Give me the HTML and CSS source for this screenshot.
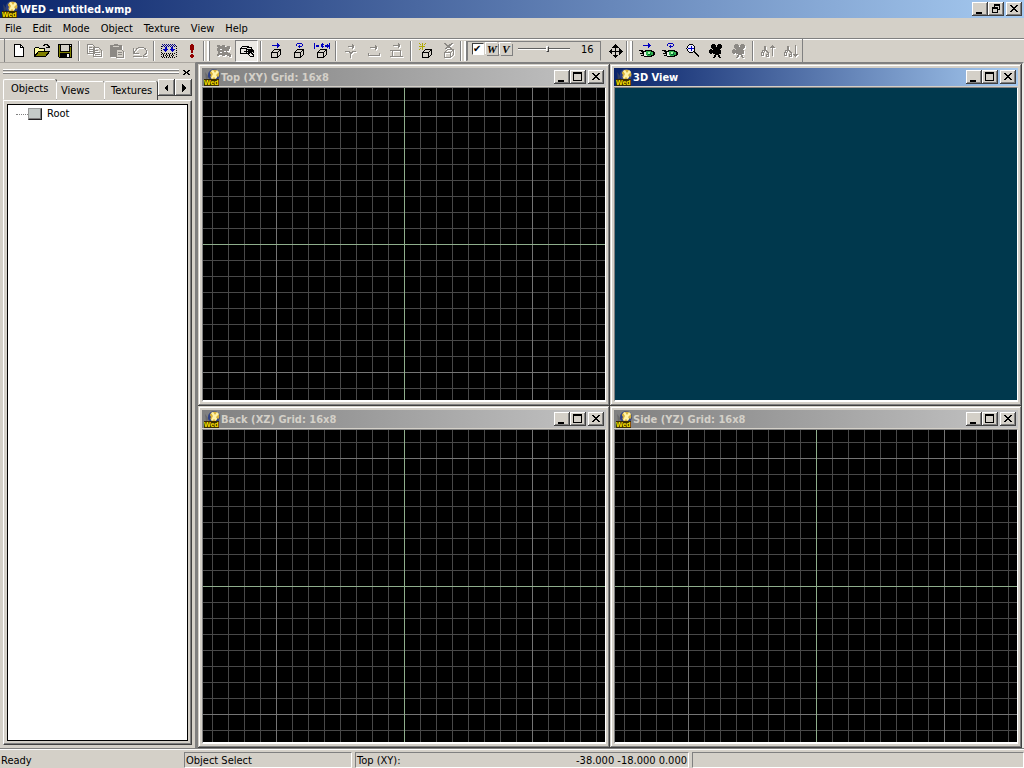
FILE: index.html
```html
<!DOCTYPE html>
<html lang="en">
<head>
<meta charset="utf-8">
<title>WED - untitled.wmp</title>
<link rel="stylesheet" href="styles.css">
</head>
<body>
<svg class="defs" aria-hidden="true">
  <symbol id="logo" viewBox="0 0 16 17" overflow="visible">
    <path d="M1 3l4 5-3 3z" fill="#555" opacity=".5"/>
    <circle cx="10" cy="6" r="6" fill="#3a4a80"/>
    <circle cx="10.500" cy="5.500" r="4.800" fill="#d9b23a"/>
    <path d="M7 2l2-1 2 3 2-3 2 2-3 3 2 3-2 1-2-2-2 2-1-1 2-4z" fill="#fff3a8"/>
    <path d="M5 3l2 3-2 4-1-3zM14 7l1 2-3 3-1-1z" fill="#2c3f86"/>
    <path d="M0 10h15v7H0z" fill="#3a2c00"/>
    <text x="0" y="16" class="logo-text">Wed</text>
  </symbol>
  <symbol id="box" viewBox="0 0 16 16">
    <path d="M3.500 9.500h6v5h-6zM3.500 9.500l3-3h6l-3 3M12.500 6.500v5l-3 3" fill="none" stroke="currentColor"/>
  </symbol>
  <symbol id="min" viewBox="0 0 16 14"><path d="M4 10h6v2H4z"/></symbol>
  <symbol id="max" viewBox="0 0 16 14"><path d="M3 2h9v9H3zM4 4v6h7V4z" fill-rule="evenodd"/></symbol>
  <symbol id="restore" viewBox="0 0 16 14"><path d="M6 2h6v6h-2V7h1V4H7v1H6zM4 5h6v6H4zM5 7v3h4V7z" fill-rule="evenodd"/></symbol>
  <symbol id="close" viewBox="0 0 16 14"><path d="M4 3h2v1h1v1h2V4h1V3h2v1h-1v1h-1v1H9v1h1v1h1v1h1v1h-2V9H9V8H7v1H6v1H4V9h1V8h1V7h1V6H6V5H5V4H4z"/></symbol>
  <symbol id="camera" viewBox="0 0 16 16"><path d="M4 1h3v1h1v2h1V2h1V1h3v1h1v3h-1v1h-1v1h1v4h-2v1h1v2h1v1h-2v-1h-1v-2H8v2H7v1H5v-1h1v-2h1v-1H5v-1H4v1H2v-1H1V7h1V6h2v1h1V6H4V5H3V2h1z" fill="currentColor"/></symbol>
  <symbol id="eye" viewBox="0 0 16 16">
    <path d="M0 7h4v1h2V7h7v1h2v1h1v3h-1v1h-2v1H5v-1H2v-1h2v-1H1v-1h2V9H2V8H0z" fill="#000"/>
    <path d="M5 9h3v4H5z" fill="#e8f4e8"/><path d="M7 8h5v1h2v3h-2v1H8v-1H7z" fill="#30b050"/><path d="M9 9h2v2H9z" fill="#afa"/><path d="M11 10h1v2H9v-1h2z" fill="#063"/>
  </symbol>
  <symbol id="arrow" viewBox="0 0 16 16"><path d="M4 3h5V1h1v1h1v1h1v1h-1v1h-1v1H9V4H4z" fill="#0000c0"/></symbol>
  <symbol id="turn" viewBox="0 0 16 16"><path d="M6 1h5v1h1v2h-1v1H9v1H8V5H7V4h1V3h1v1h2V2H6v2H5V2h1z" fill="#0000c0"/></symbol>
  <symbol id="sort" viewBox="0 0 16 16"><path d="M4.500 9v-6h1v4l3 3v3h-2v-2h2M1.500 12.500v-3h2v3zM2.500 9v-2h2" fill="none" stroke="currentColor"/></symbol>
  <symbol id="stamp" viewBox="0 0 16 16"><path d="M1 2h3v1h2V2h3v2h2V3h3v3h-1v2h-2v1h1v1h2v1h1v3h-2v-1h-2v-1H9v1H6v-1H3v1H1v-2h1V8H1V5h1V4H1zM4 6v1h2V6zM8 8v1h2V8zM4 9v1h2V9z" fill="currentColor" fill-rule="evenodd"/></symbol>
</svg>

<div class="app">
  <header class="titlebar active">
    <svg class="logo"><use href="#logo"/></svg>
    <h1 class="caption">WED - untitled.wmp</h1>
    <button class="cap" aria-label="Minimize"><svg><use href="#min"/></svg></button>
    <button class="cap" aria-label="Restore"><svg><use href="#restore"/></svg></button>
    <button class="cap shut" aria-label="Close"><svg><use href="#close"/></svg></button>
  </header>

  <nav class="menu">
    <button>File</button><button>Edit</button><button>Mode</button><button>Object</button><button>Texture</button><button>View</button><button>Help</button>
  </nav>

  <div class="toolbar">
    <div class="band first">
      <button class="tool" aria-label="New"><svg viewBox="0 0 16 16"><path d="M3.500 1.500h6l3 3v9h-9z" fill="#fff" stroke="#000"/><path d="M9.500 1.500v3h3" fill="none" stroke="#000"/></svg></button>
      <button class="tool" aria-label="Open"><svg viewBox="0 0 16 16"><path d="M1 5h4v1h5v3H5v1H4v1H3v1H2v1H1z" fill="#ffffa0"/><path d="M4 9h11l-3 5H1z" fill="#808000"/><path d="M.5 13.500v-8l1-1h3l1 1h5v3M.5 13.500l4-5h11l-4 5zM9 2.500h1l1-1h2l1 1v2M12 4.500h3v-2" fill="none" stroke="#000"/></svg></button>
      <button class="tool" aria-label="Save"><svg viewBox="0 0 16 16"><path d="M1 1h14v14H2l-1-1z"/><path d="M2 2h1v12H2zM13 4h1v10h-1zM3 9h10v1H3z" fill="#808000"/><path d="M4 2h8v6H4z" fill="#d4d0c8"/><path d="M10 11h2v3h-2zM13 2h1v1h-1z" fill="#eee"/></svg></button>
      <i class="sep"></i>
      <button class="tool off" aria-label="Copy"><svg viewBox="0 0 16 16"><path d="M1.500 1.500h5l2 2v7h-7zM3 4.500h3M3 6.500h4M3 8.500h4M7.500 4.500h5l3 3v6h-8zM9 7.500h3M9 9.500h5M9 11.500h5" fill="none" stroke="currentColor"/></svg></button>
      <button class="tool off" aria-label="Paste"><svg viewBox="0 0 16 16"><path d="M1 2h4V1h4v1h4v4h-5v8H1z" fill="currentColor"/><path d="M4 3h6v1H4z" fill="#d4d0c8"/><path d="M7.500 6.500h5l2 2v6h-7zM9 9.500h4M9 11.500h4" fill="#d4d0c8" stroke="currentColor"/></svg></button>
      <button class="tool off" aria-label="Undo"><svg viewBox="0 0 16 16"><path d="M1.500 5v5h5M2 9.500l3-4q4-3 8 0 3 4 0 6l-2 1M1 13.500h9M11 13.500h4" fill="none" stroke="currentColor"/></svg></button>
      <i class="sep"></i>
      <button class="tool" aria-label="Build map"><svg viewBox="0 0 16 16"><path d="M.5 3v12M15.500 3v12" stroke="#000" stroke-dasharray="1 1"/><path d="M1 14.500h14M2 12.500h12M1 10.500h14" stroke="#000" stroke-dasharray="1 1"/><path d="M2 11.500h12M2 13.500h12" stroke="#000" stroke-dasharray="1 2"/><path d="M1 1.500h14M2 2.500h14M1 3.500h14" stroke="#000080" stroke-dasharray="1 1"/><path d="M4 4h2v2h1v1H6v1H5v1H4V8H3V7H2V6h2zM10 4h2v2h2v1h-1v1h-1v1h-1V8h-1V7H9V6h1z" fill="#0000c0"/></svg></button>
      <button class="tool" aria-label="Run"><svg viewBox="0 0 16 16"><path d="M7 1h2v1h1v5H9v3H7V7H6V2h1zM7 11h2v1h1v2H9v1H7v-1H6v-2h1z" fill="#900000"/></svg></button>
    </div>

    <div class="band">
      <i class="grip"></i>
      <button class="tool off" aria-label="Brush mode"><svg><use href="#stamp"/></svg></button>
      <button class="tool pressed" aria-label="Object select"><svg viewBox="0 0 16 16"><path d="M1.500 5.500h6v5h-6zM1.500 5.500l2-2h6l-2 2M9.500 4l3 1 2 3M7.500 10l3 0M8 6.500h4l3 3M5 8.500h6l4 4M8 10l3 3h4" fill="none" stroke="#000"/><path d="M9 7h4v3H9z"/></svg></button>
      <i class="sep"></i>
      <button class="tool" aria-label="Move"><svg><use href="#box"/><use href="#arrow" y="-1"/></svg></button>
      <button class="tool" aria-label="Rotate"><svg><use href="#box"/><use href="#turn" y="-1"/></svg></button>
      <button class="tool" aria-label="Scale"><svg viewBox="0 0 16 16"><use href="#box" width="16" height="16"/><path d="M0 0h1v6H0zM15 0h1v6h-1zM1 3l2-2v1h2v2H3v1zM15 3l-2-2v1h-2v2h2v1zM6 2l2-2 2 2H9v1h1L8 5 6 3h1V2z" fill="#0000c0"/></svg></button>
      <i class="sep"></i>
      <button class="tool off" aria-label="Move vertex"><svg viewBox="0 0 16 16"><path d="M5 3.500h6M9.500 1v5M10.500 2v3M2 8.500h4l2 2 2-2h3M7.500 10v5" fill="none" stroke="currentColor"/></svg></button>
      <button class="tool off" aria-label="Move edge"><svg viewBox="0 0 16 16"><path d="M4 4.500h7M9.500 2v5M10.500 3v3M2.500 10v2.500h11V10" fill="none" stroke="currentColor"/></svg></button>
      <button class="tool off" aria-label="Move face"><svg viewBox="0 0 16 16"><path d="M4 2.500h7M9.500 0v5M10.500 1v3M3.500 7.500h8v6h-8zM1 7.500h2M1 13.500h2M12 13.500h2" fill="none" stroke="currentColor"/></svg></button>
      <i class="sep"></i>
      <button class="tool" aria-label="Add object"><svg viewBox="0 0 16 16"><use href="#box" x="1" width="16" height="16"/><path d="M4 0h1v3h2v1H5v3H4V4H1V3h3zM1 0h1v1h1v1H2V1H1zM7 0h1v1H7v1H6V1h1zM2 5h1v1H2v1H1V6h1z" fill="#b0a800"/></svg></button>
      <button class="tool off" aria-label="Delete object"><svg viewBox="0 0 16 16"><use href="#box" width="16" height="16"/><path d="M3 0h2v1h1v1h2V1h2V0h2v1h-1v1h-1v1H9v1h1v1h1v1H9V5H6v1H4V5h1V4h1V3H5V2H4V1H3z" fill="currentColor"/></svg></button>
    </div>

    <div class="band">
      <i class="grip short"></i>
      <div class="gridbox">
        <input type="checkbox" class="check" aria-label="Show grid" checked>
        <button class="letter">W</button>
        <button class="letter">V</button>
        <input type="range" class="slider" aria-label="Grid size" min="0" max="100" value="58">
        <output class="size">16</output>
      </div>
      <button class="tool" aria-label="Center"><svg viewBox="0 0 16 16"><path d="M7 5H5V4h1V3h1V2h1V1h1v1h1v1h1v1h1v1H9v3h3V5h1v1h1v1h1v1h1v1h-1v1h-1v1h-1v1h-1V9H9v3h2v1h-1v1H9v1H8v-1H7v-1H6v-1h2V9H5v2H4v-1H3V9H2V8h1V7h1V6h1v2h3V5z"/></svg></button>
    </div>

    <div class="band last">
      <i class="grip"></i>
      <button class="tool" aria-label="Move camera"><svg><use href="#eye"/><use href="#arrow" y="-1"/></svg></button>
      <button class="tool" aria-label="Turn camera"><svg><use href="#eye"/><use href="#turn" y="-1"/></svg></button>
      <button class="tool" aria-label="Zoom"><svg viewBox="0 0 16 16"><circle cx="6" cy="5.500" r="4" fill="#eef" stroke="#000"/><path d="M3 5h6v1H3zM5.500 3h1v5h-1z" fill="#0000c0"/><path d="M9 8.500l5 5" stroke="#000" stroke-width="2"/></svg></button>
      <button class="tool" aria-label="Camera"><svg><use href="#camera"/></svg></button>
      <button class="tool off" aria-label="Camera off"><svg><use href="#camera"/></svg></button>
      <i class="sep"></i>
      <button class="tool off" aria-label="Move up"><svg viewBox="0 0 16 16"><use href="#sort" width="16" height="16"/><path d="M12.500 2v11M10 4.500h5M11 3.500h3" stroke="currentColor"/></svg></button>
      <button class="tool off" aria-label="Move down"><svg viewBox="0 0 16 16"><use href="#sort" width="16" height="16"/><path d="M12.500 2v12M10 11.500h5M11 12.500h3" stroke="currentColor"/></svg></button>
    </div>
  </div>

  <main class="body">
    <aside class="panel">
      <div class="dock"><i class="rails"></i><button class="dock-close" aria-label="Close panel"><svg viewBox="0 0 7 7"><path d="M0 1h2v1h1v1h1V2h1V1h2v1H6v1H5v1h1v1h1v1H5V5H4V4H3v1H2v1H0V5h1V4h1V3H1V2H0z"/></svg></button></div>
      <div class="tabs">
        <button class="tab on">Objects</button><button class="tab views">Views</button><button class="tab textures">Textures</button>
        <button class="step" aria-label="Scroll left"><svg viewBox="0 0 8 8"><path d="M5 0v8L1 4z"/></svg></button>
        <button class="step" aria-label="Scroll right"><svg viewBox="0 0 8 8"><path d="M2 0v8l4-4z"/></svg></button>
      </div>
      <div class="page">
        <ul class="tree"><li><i class="branch"></i><i class="cube"></i><span>Root</span></li></ul>
      </div>
    </aside>

    <div class="mdi">
      <section class="win">
        <div class="titlebar"><svg class="logo"><use href="#logo"/></svg><h2 class="caption">Top (XY) Grid: 16x8</h2>
          <button class="cap" aria-label="Minimize"><svg><use href="#min"/></svg></button><button class="cap" aria-label="Maximize"><svg><use href="#max"/></svg></button><button class="cap shut" aria-label="Close"><svg><use href="#close"/></svg></button></div>
        <div class="canvas grid"></div>
      </section>
      <section class="win">
        <div class="titlebar active"><svg class="logo"><use href="#logo"/></svg><h2 class="caption">3D View</h2>
          <button class="cap" aria-label="Minimize"><svg><use href="#min"/></svg></button><button class="cap" aria-label="Maximize"><svg><use href="#max"/></svg></button><button class="cap shut" aria-label="Close"><svg><use href="#close"/></svg></button></div>
        <div class="canvas scene"></div>
      </section>
      <section class="win">
        <div class="titlebar"><svg class="logo"><use href="#logo"/></svg><h2 class="caption">Back (XZ) Grid: 16x8</h2>
          <button class="cap" aria-label="Minimize"><svg><use href="#min"/></svg></button><button class="cap" aria-label="Maximize"><svg><use href="#max"/></svg></button><button class="cap shut" aria-label="Close"><svg><use href="#close"/></svg></button></div>
        <div class="canvas grid"></div>
      </section>
      <section class="win">
        <div class="titlebar"><svg class="logo"><use href="#logo"/></svg><h2 class="caption">Side (YZ) Grid: 16x8</h2>
          <button class="cap" aria-label="Minimize"><svg><use href="#min"/></svg></button><button class="cap" aria-label="Maximize"><svg><use href="#max"/></svg></button><button class="cap shut" aria-label="Close"><svg><use href="#close"/></svg></button></div>
        <div class="canvas grid"></div>
      </section>
    </div>
  </main>

  <footer class="status">
    <span class="ready">Ready</span>
    <span class="cell mode">Object Select</span>
    <span class="cell coords"><span>Top (XY):</span><span>-38.000 -18.000 0.000</span></span>
    <span class="cell rest"></span>
  </footer>
</div>
</body>
</html>
```

FILE: styles.css
```css
:root {
  --face: #d4d0c8;
  --shade: #808080;
  --dark: #404040;
}
* { box-sizing: border-box; }
body { margin: 0; background: var(--face); }
body, button, output {
  font-family: "DejaVu Sans Condensed", "DejaVu Sans", sans-serif;
  font-size: 11px;
  line-height: 14px;
  color: #000;
}
button { margin: 0; padding: 0; border: 0; background: none; }
svg { display: block; shape-rendering: crispEdges; }
.defs { position: absolute; width: 0; height: 0; }
.app { display: flex; flex-direction: column; height: 100vh; overflow: hidden; }

/* Title bars */
.titlebar {
  display: flex;
  align-items: center;
  flex: none;
  height: 18px;
  padding: 0 2px;
  background: linear-gradient(90deg, #808080, #c4c4c4);
  color: #d4d0c8;
}
.titlebar.active { background: linear-gradient(90deg, #0a246a, #a6caf0); color: #fff; }
.logo { flex: none; width: 16px; height: 17px; overflow: visible; shape-rendering: auto; }
.logo-text { font: bold 7px "Liberation Sans", sans-serif; fill: #ffe600; }
.caption { flex: 1; margin: 0 0 0 2px; padding-top: 2px; font-size: 11px; line-height: 14px; font-weight: bold; white-space: nowrap; }
.cap {
  width: 16px;
  height: 14px;
  background: var(--face);
  box-shadow: inset -1px -1px #404040, inset 1px 1px #fff, inset -2px -2px #808080;
}
.cap svg { width: 16px; height: 14px; }
.shut { margin-left: 2px; }

/* Menu */
.menu { display: flex; gap: 11px; flex: none; height: 20px; padding: 0 5px; }
.menu button { padding-top: 2px; }

/* Toolbar */
.toolbar { display: flex; flex: none; height: 24px; border-top: 1px solid var(--shade); box-shadow: inset 0 1px #fff; }
.band { display: flex; align-items: center; }
.first { margin-left: 4px; padding-left: 2px; border-left: 1px solid var(--shade); }
.last { border-right: 1px solid var(--shade); }
.grip { width: 9px; height: 20px; background: linear-gradient(90deg, #808080 1px, #fff 1px 2px, transparent 2px 4px, #fff 4px 6px, #808080 6px 7px, transparent 7px); }
.short { width: 7px; }
.tool { display: grid; place-items: center; width: 23px; height: 22px; }
.tool svg { width: 16px; height: 16px; overflow: visible; }
.off { color: #8c8984; }
.off svg { filter: drop-shadow(1px 1px #fff); }
.pressed { background: #ebe9e4; border: 1px solid; border-color: #808080 #fff #fff #808080; }
.sep { width: 6px; height: 20px; background: linear-gradient(90deg, transparent 2px, #808080 2px 3px, #fff 3px 4px, transparent 4px); }
.gridbox {
  display: flex;
  align-items: center;
  height: 20px;
  width: 134px;
  margin-right: 2px;
  padding: 0 0 3px 4px;
  border: 1px solid;
  border-color: var(--shade) var(--shade) transparent var(--shade);
}
.check {
  appearance: none;
  width: 12px;
  height: 12px;
  margin: 0 2px 0 0;
  border: 1px solid;
  border-color: var(--dark) #fff #fff var(--dark);
  background: #fff;
}
.check:checked::before { content: "✔"; display: block; font: bold 10px/10px "DejaVu Sans", sans-serif; }
.letter {
  width: 12px;
  height: 12px;
  margin-right: 2px;
  box-shadow: 1px 1px #808080, -1px -1px #fff;
  font: italic bold 11px/12px "Liberation Serif", serif;
}
.slider { appearance: none; width: 52px; height: 12px; margin: 0 0 0 4px; background: linear-gradient(transparent 5px, #606060 5px 6px, #fff 6px 7px, transparent 7px); }
.slider::-webkit-slider-thumb { appearance: none; width: 3px; height: 6px; border: 1px solid; border-color: #fff #404040 #404040 #fff; background: var(--face); }
.size { flex: 1; padding: 2px 0 0 11px; }

/* Side panel */
.body { display: flex; flex: 1; min-height: 0; }
.panel { display: flex; flex-direction: column; flex: none; width: 196px; padding: 4px 3px 3px 3px; border-top: 1px solid #aaa6a0; border-right: 1px solid var(--shade); }
.dock { display: flex; align-items: center; height: 10px; gap: 4px; }
.rails { flex: 1; height: 6px; background: linear-gradient(#fff 1px, #808080 1px 2px, transparent 2px 3px, #fff 3px 4px, #808080 4px 5px, transparent 5px); }
.dock-close { width: 7px; height: 7px; margin-right: 2px; }
.dock-close svg { width: 7px; height: 7px; }
.tabs { display: flex; align-items: flex-end; height: 23px; padding-top: 2px; }
.tab {
  height: 19px;
  border: 1px solid;
  border-color: #fff transparent transparent #fff;
  border-radius: 2px 2px 0 0;
  box-shadow: 1px 0 var(--dark);
  text-align: left;
  padding-left: 4px;
}
.tab.on { height: 21px; width: 53px; padding: 0 0 2px 7px; }
.tab.views { width: 48px; }
.tab.textures { width: 53px; padding-left: 6px; }
.step {
  display: grid;
  place-items: center;
  align-self: flex-start;
  width: 17px;
  height: 17px;
  margin-left: 1px;
  box-shadow: inset -1px -1px #404040, inset 1px 1px #fff, inset -2px -2px #808080;
}
.step + .step { margin-left: 0; }
.step svg { width: 8px; height: 8px; }
.page { flex: 1; display: flex; padding: 3px; border: 1px solid; border-color: #fff var(--dark) var(--dark) #fff; box-shadow: inset -1px -1px #808080; }
.tree { flex: 1; margin: 0; padding: 0; border: 1px solid #000; background: #fff; list-style: none; }
.tree li { display: flex; align-items: center; height: 18px; padding-left: 8px; }
.branch { width: 12px; border-top: 1px dotted #808080; }
.cube { width: 14px; height: 12px; margin-right: 5px; border: 1px solid; border-color: #999 #222 #222 #999; background: #c4cbc8; box-shadow: inset -1px -1px #808080; }

/* Document windows */
.mdi { flex: 1; display: grid; grid-template: 1fr 1fr / 1fr 1fr; min-width: 0; border: 2px solid; border-bottom: 0; border-color: var(--shade) #eceae6 #eceae6 var(--shade); background: var(--shade); }
.win {
  display: flex;
  flex-direction: column;
  min-width: 0;
  padding: 4px;
  background: var(--face);
  box-shadow: inset -1px -1px #404040, inset 1px 1px #d4d0c8, inset -2px -2px #808080, inset 2px 2px #fff;
}
.win .caption { margin-left: 1px; }
.canvas { flex: 1; margin-top: 1px; border: 1px solid; border-bottom-width: 2px; border-color: #808080 #fff #fff #808080; }
.scene { background: #00384d; }
.grid {
  background-color: #000;
  background-image:
    linear-gradient(90deg, transparent 50%, #8fae8c 50% calc(50% + 1px), transparent calc(50% + 1px)),
    linear-gradient(transparent 50%, #8fae8c 50% calc(50% + 1px), transparent calc(50% + 1px)),
    linear-gradient(90deg, transparent 64px, #747474 64px 65px, transparent 65px),
    linear-gradient(transparent 64px, #747474 64px 65px, transparent 65px),
    linear-gradient(90deg, transparent 8px, #484848 8px 9px, transparent 9px),
    linear-gradient(transparent 8px, #484848 8px 9px, transparent 9px);
  background-size: 100% 100%, 100% 100%, 128px 128px, 128px 128px, 16px 16px, 16px 16px;
  background-position: center;
  background-repeat: no-repeat, no-repeat, repeat, repeat, repeat, repeat;
}

/* Status bar */
.status { display: flex; flex: none; height: 20px; padding-top: 3px; border-top: 1px solid var(--shade); box-shadow: inset 0 1px #fff; gap: 3px; white-space: nowrap; }
.ready { width: 181px; padding: 2px 1px; }
.cell { padding: 1px; border: 1px solid; border-color: var(--shade) #fff #fff var(--shade); }
.mode { width: 168px; }
.coords { display: flex; justify-content: space-between; width: 334px; }
.rest { flex: 1; }
```
